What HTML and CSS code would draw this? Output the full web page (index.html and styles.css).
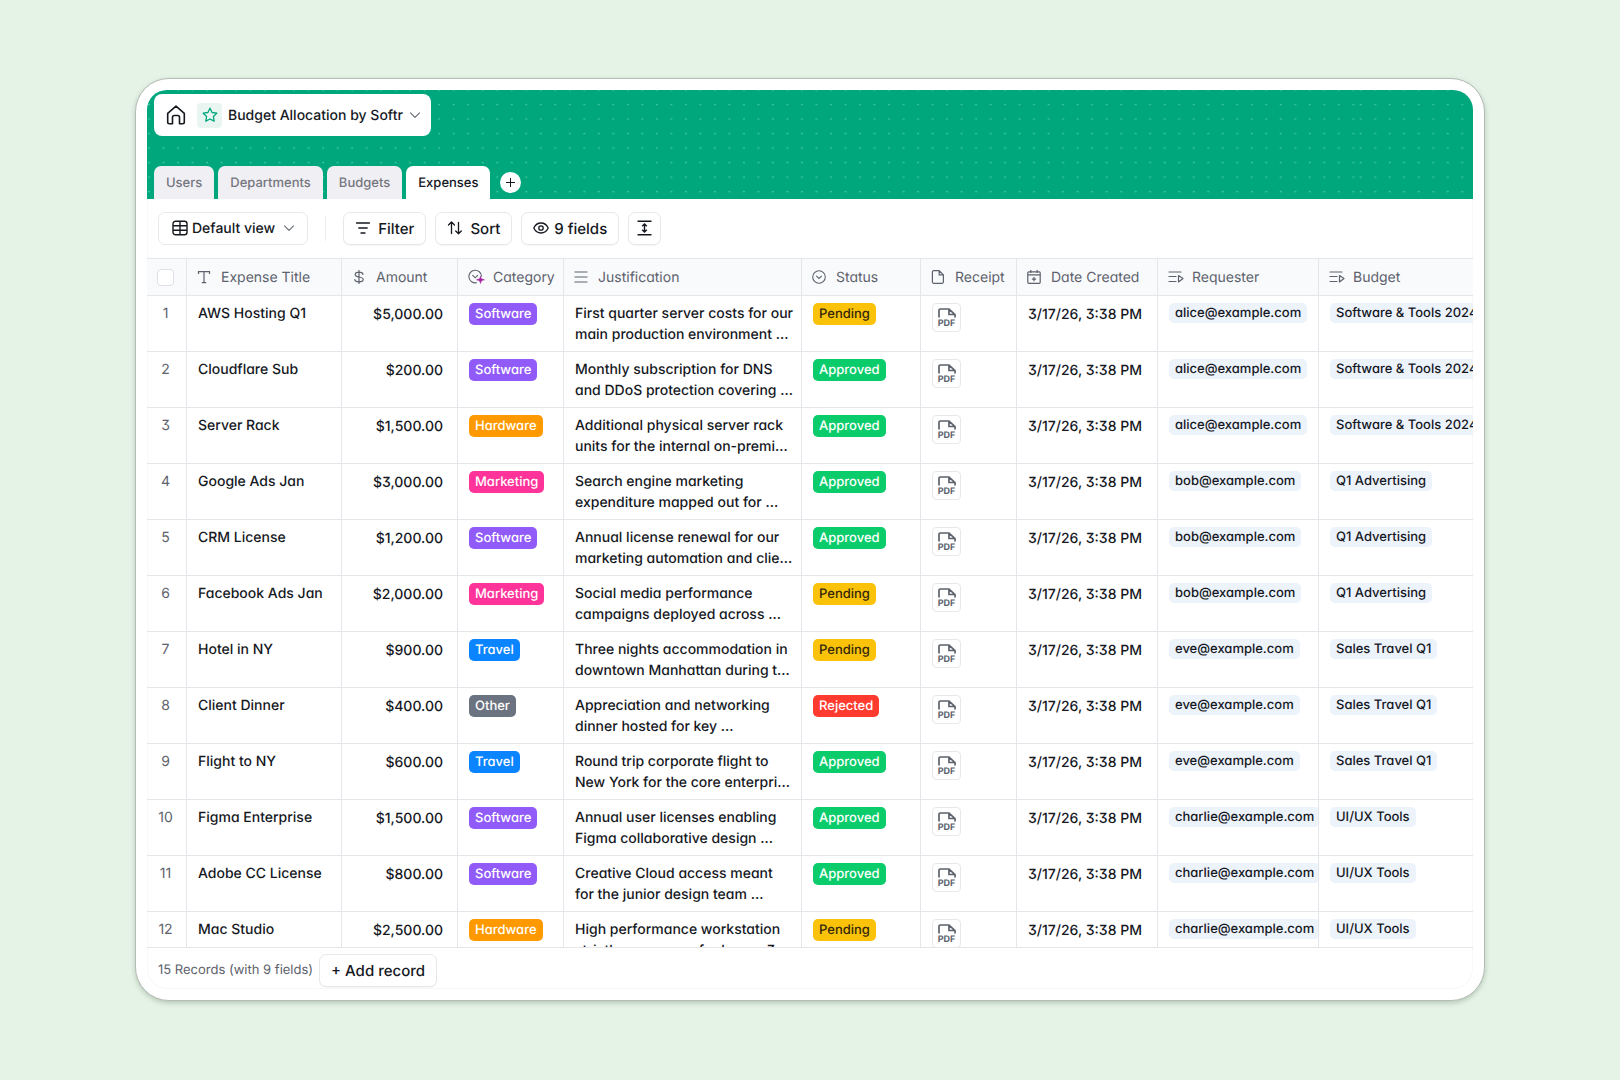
FILE: index.html
```html
<!DOCTYPE html>
<html lang="en">
<head>
<meta charset="utf-8">
<title>Budget Allocation by Softr</title>
<link rel="stylesheet" href="styles.css">
</head>
<body>
<svg class="sprite" aria-hidden="true">
  <symbol id="i-pdf" viewBox="0 0 18 10"><path d="M1 9.500V2.200A1.200 1.200 0 0 1 2.200 1H11L17 6.500V9.500M11 1V6.500H17" fill="none" stroke="currentColor" stroke-width="1.700"/></symbol>
  <symbol id="i-link" viewBox="0 0 16 16"><path d="M1 3h12M1 7.500h7M1 12.500h7M10.500 6.500l4.500 3-4.500 3.500z" fill="none" stroke="currentColor" stroke-width="1.200" stroke-linejoin="round" stroke-linecap="round"/></symbol>
  <symbol id="i-chev" viewBox="0 0 12 12"><path d="M1.500 3.800L6 8.300l4.500-4.500" fill="none" stroke="currentColor" stroke-width="1.200" stroke-linecap="round" stroke-linejoin="round"/></symbol>
</svg>
<main class="card">
  <div class="app">
    <header class="top">
      <svg class="dots" aria-hidden="true"><defs><pattern id="dot" x="0" y="-2.500" width="14.510" height="14.510" patternUnits="userSpaceOnUse"><circle cx="2" cy="2.500" r=".9" fill="#5fd9b2" fill-opacity=".75"/></pattern><pattern id="tile" width="1211.700" height="109" patternUnits="userSpaceOnUse"><rect width="1211.700" height="109" fill="url(#dot)"/></pattern></defs><rect width="100%" height="100%" fill="url(#tile)"/></svg>
      <div class="brand">
        <a class="home" href="#" aria-label="Home"><svg width="20" height="20" viewBox="0 0 20 20" fill="none" stroke="currentColor" stroke-width="1.600" stroke-linejoin="round" stroke-linecap="round"><path d="M1.700 8.400L10 1.200l8.300 7.200v8.800a1.500 1.500 0 0 1-1.500 1.500h-3.300V12.200a1.700 1.700 0 0 0-1.700-1.700H8.200a1.700 1.700 0 0 0-1.700 1.700v6.500H3.200a1.500 1.500 0 0 1-1.500-1.500z"/></svg></a>
        <span class="star"><svg width="16" height="16" viewBox="0 0 16 16" fill="none" stroke="currentColor" stroke-width="1.300" stroke-linejoin="round"><path d="M8 1.200l2.100 4.300 4.700.7-3.400 3.300.8 4.700L8 12l-4.200 2.200.8-4.700L1.200 6.200l4.700-.7z"/></svg></span>
        <button class="app-name" type="button">Budget Allocation by Softr <svg class="chev" width="12" height="12"><use href="#i-chev"/></svg></button>
      </div>
      <nav class="tabs">
        <a href="#" class="tab">Users</a>
        <a href="#" class="tab">Departments</a>
        <a href="#" class="tab">Budgets</a>
        <a href="#" class="tab active">Expenses</a>
        <button class="plus" type="button" aria-label="Add table"><svg width="9" height="9" viewBox="0 0 9 9" stroke="currentColor" stroke-width="1"><path d="M4.500 0v9M0 4.500h9"/></svg></button>
      </nav>
    </header>
    <div class="toolbar">
      <button class="btn view" type="button"><svg width="16" height="16" viewBox="0 0 16 16" fill="none" stroke="currentColor" stroke-width="1.400"><rect x="1" y="1.200" width="14" height="13.600" rx="2.500"/><path d="M1 5.700h14M1 10.300h14M8 1.200v13.600"/></svg>Default view<svg class="chev" width="12" height="12"><use href="#i-chev"/></svg></button>
      <span class="sep"></span>
      <button class="btn filter" type="button"><svg width="16" height="16" viewBox="0 0 16 16" fill="none" stroke="currentColor" stroke-width="1.300" stroke-linecap="round"><path d="M1.500 3h13M3.800 8h8.400M6 13h4"/></svg>Filter</button>
      <button class="btn filter" type="button"><svg width="16" height="16" viewBox="0 0 16 16" fill="none" stroke="currentColor" stroke-width="1.300" stroke-linecap="round" stroke-linejoin="round"><path d="M4.500 13.500v-11M1.500 5l3-3 3 3M11.500 2.500v11M8.700 11l2.800 2.800 2.800-2.800"/></svg>Sort</button>
      <button class="btn" type="button"><svg width="16" height="16" viewBox="0 0 16 16" fill="none" stroke="currentColor" stroke-width="1.300"><path d="M.8 8C2.300 4.800 5 3 8 3s5.700 1.800 7.200 5C13.700 11.200 11 13 8 13S2.300 11.200.8 8z"/><circle cx="8" cy="8" r="2.200"/></svg>9 fields</button>
      <button class="btn square" type="button" aria-label="Row height"><svg width="15" height="16" viewBox="0 0 15 16" fill="none" stroke="currentColor" stroke-width="1.400"><path d="M.5 1.200h14M.5 14.800h14M7.500 4.200v7.600M5.200 6.200l2.300-2.200 2.300 2.200M5.200 9.800l2.300 2.200 2.300-2.200"/></svg></button>
    </div>
    <div class="grid">
      <table>
        <colgroup><col class="c-num"><col class="c-title"><col class="c-amount"><col class="c-cat"><col class="c-just"><col class="c-status"><col class="c-receipt"><col class="c-date"><col class="c-req"><col></colgroup>
        <thead>
          <tr>
            <th class="num"><input type="checkbox" aria-label="Select all"></th>
            <th><span class="h"><svg width="14" height="14" viewBox="0 0 14 14" fill="none" stroke="currentColor" stroke-width="1.200"><path d="M1.500 4V1.600h11V4M7 1.600v11M4.800 12.600h4.400"/></svg>Expense Title</span></th>
            <th><span class="h"><svg width="14" height="14" viewBox="0 0 14 14" fill="none" stroke="currentColor" stroke-width="1.200" stroke-linecap="round"><path d="M7 .5v13M11 4.300C10.800 2.900 9.300 2.200 7 2.200S3.200 3 3.200 4.500 4.600 6.600 7 7s4.200 1 4.200 2.500S9.500 11.800 7 11.800 3 11 2.800 9.600"/></svg>Amount</span></th>
            <th><span class="h tight"><svg width="17" height="16" viewBox="0 0 17 16" fill="none" stroke="currentColor" stroke-width="1.100"><path d="M8.500 13.700A6.300 6.300 0 1 1 13.500 7.200M4.700 6.300l2.500 2.500 2.500-2.500" stroke-linecap="round"/><path d="M12.500 7.200c.4 2.300 1 2.900 3.900 3.600-2.900.6-3.500 1.200-3.900 3.700-.4-2.500-1-3.100-3.900-3.700 2.900-.7 3.500-1.300 3.900-3.600z" fill="#a3219e" stroke="#a3219e" stroke-width=".6"/></svg>Category</span></th>
            <th><span class="h"><svg width="14" height="14" viewBox="0 0 14 14" stroke="currentColor" stroke-width="1.200"><path d="M.5 2h13M.5 7h13M.5 12h13"/></svg>Justification</span></th>
            <th><span class="h"><svg width="14" height="14" viewBox="0 0 14 14" fill="none" stroke="currentColor" stroke-width="1.100" stroke-linecap="round"><circle cx="7" cy="7" r="6.300"/><path d="M4.500 6.200L7 8.500l2.500-2.300"/></svg>Status</span></th>
            <th><span class="h"><svg width="14" height="14" viewBox="0 0 14 14" fill="none" stroke="currentColor" stroke-width="1.200" stroke-linejoin="round"><path d="M2.600.7h5.600l4.200 4.200v7.200a1.200 1.200 0 0 1-1.200 1.200H2.600a1.200 1.200 0 0 1-1.200-1.200V1.900A1.200 1.200 0 0 1 2.600.7zM8.200.7v4.200h4.200"/></svg>Receipt</span></th>
            <th><span class="h"><svg width="14" height="14" viewBox="0 0 14 14" fill="none" stroke="currentColor" stroke-width="1.200"><rect x=".8" y="1.800" width="12.400" height="11.500" rx="1"/><path d="M.8 4.900h12.400M3.800 0v3M10.200 0v3M7 7v4.200M4.900 9.100h4.200"/></svg>Date Created</span></th>
            <th><span class="h tight"><svg width="16" height="16"><use href="#i-link"/></svg>Requester</span></th>
            <th><span class="h tight"><svg width="16" height="16"><use href="#i-link"/></svg>Budget</span></th>
          </tr>
        </thead>
        <tbody>
          <tr><td class="num">1</td><td>AWS Hosting Q1</td><td class="amount">$5,000.00</td><td><span class="chip software">Software</span></td><td>First quarter server costs for our main production environment ...</td><td><span class="chip pending">Pending</span></td><td><a class="pdf" href="#"><svg width="18" height="10"><use href="#i-pdf"/></svg><b>PDF</b></a></td><td class="date">3/17/26, 3:38 PM</td><td><span class="ref">alice@example.com</span></td><td><span class="ref">Software &amp; Tools 2024</span></td></tr>
          <tr><td class="num">2</td><td>Cloudflare Sub</td><td class="amount">$200.00</td><td><span class="chip software">Software</span></td><td>Monthly subscription for DNS and DDoS protection covering ...</td><td><span class="chip approved">Approved</span></td><td><a class="pdf" href="#"><svg width="18" height="10"><use href="#i-pdf"/></svg><b>PDF</b></a></td><td class="date">3/17/26, 3:38 PM</td><td><span class="ref">alice@example.com</span></td><td><span class="ref">Software &amp; Tools 2024</span></td></tr>
          <tr><td class="num">3</td><td>Server Rack</td><td class="amount">$1,500.00</td><td><span class="chip hardware">Hardware</span></td><td>Additional physical server rack units for the internal on-premi...</td><td><span class="chip approved">Approved</span></td><td><a class="pdf" href="#"><svg width="18" height="10"><use href="#i-pdf"/></svg><b>PDF</b></a></td><td class="date">3/17/26, 3:38 PM</td><td><span class="ref">alice@example.com</span></td><td><span class="ref">Software &amp; Tools 2024</span></td></tr>
          <tr><td class="num">4</td><td>Google Ads Jan</td><td class="amount">$3,000.00</td><td><span class="chip marketing">Marketing</span></td><td>Search engine marketing expenditure mapped out for ...</td><td><span class="chip approved">Approved</span></td><td><a class="pdf" href="#"><svg width="18" height="10"><use href="#i-pdf"/></svg><b>PDF</b></a></td><td class="date">3/17/26, 3:38 PM</td><td><span class="ref">bob@example.com</span></td><td><span class="ref">Q1 Advertising</span></td></tr>
          <tr><td class="num">5</td><td>CRM License</td><td class="amount">$1,200.00</td><td><span class="chip software">Software</span></td><td>Annual license renewal for our marketing automation and clie...</td><td><span class="chip approved">Approved</span></td><td><a class="pdf" href="#"><svg width="18" height="10"><use href="#i-pdf"/></svg><b>PDF</b></a></td><td class="date">3/17/26, 3:38 PM</td><td><span class="ref">bob@example.com</span></td><td><span class="ref">Q1 Advertising</span></td></tr>
          <tr><td class="num">6</td><td>Facebook Ads Jan</td><td class="amount">$2,000.00</td><td><span class="chip marketing">Marketing</span></td><td>Social media performance campaigns deployed across ...</td><td><span class="chip pending">Pending</span></td><td><a class="pdf" href="#"><svg width="18" height="10"><use href="#i-pdf"/></svg><b>PDF</b></a></td><td class="date">3/17/26, 3:38 PM</td><td><span class="ref">bob@example.com</span></td><td><span class="ref">Q1 Advertising</span></td></tr>
          <tr><td class="num">7</td><td>Hotel in NY</td><td class="amount">$900.00</td><td><span class="chip travel">Travel</span></td><td>Three nights accommodation in downtown Manhattan during t...</td><td><span class="chip pending">Pending</span></td><td><a class="pdf" href="#"><svg width="18" height="10"><use href="#i-pdf"/></svg><b>PDF</b></a></td><td class="date">3/17/26, 3:38 PM</td><td><span class="ref">eve@example.com</span></td><td><span class="ref">Sales Travel Q1</span></td></tr>
          <tr><td class="num">8</td><td>Client Dinner</td><td class="amount">$400.00</td><td><span class="chip other">Other</span></td><td>Appreciation and networking dinner hosted for key ...</td><td><span class="chip rejected">Rejected</span></td><td><a class="pdf" href="#"><svg width="18" height="10"><use href="#i-pdf"/></svg><b>PDF</b></a></td><td class="date">3/17/26, 3:38 PM</td><td><span class="ref">eve@example.com</span></td><td><span class="ref">Sales Travel Q1</span></td></tr>
          <tr><td class="num">9</td><td>Flight to NY</td><td class="amount">$600.00</td><td><span class="chip travel">Travel</span></td><td>Round trip corporate flight to New York for the core enterpri...</td><td><span class="chip approved">Approved</span></td><td><a class="pdf" href="#"><svg width="18" height="10"><use href="#i-pdf"/></svg><b>PDF</b></a></td><td class="date">3/17/26, 3:38 PM</td><td><span class="ref">eve@example.com</span></td><td><span class="ref">Sales Travel Q1</span></td></tr>
          <tr><td class="num">10</td><td>Figma Enterprise</td><td class="amount">$1,500.00</td><td><span class="chip software">Software</span></td><td>Annual user licenses enabling Figma collaborative design ...</td><td><span class="chip approved">Approved</span></td><td><a class="pdf" href="#"><svg width="18" height="10"><use href="#i-pdf"/></svg><b>PDF</b></a></td><td class="date">3/17/26, 3:38 PM</td><td><span class="ref">charlie@example.com</span></td><td><span class="ref">UI/UX Tools</span></td></tr>
          <tr><td class="num">11</td><td>Adobe CC License</td><td class="amount">$800.00</td><td><span class="chip software">Software</span></td><td>Creative Cloud access meant for&nbsp;the junior design team ...</td><td><span class="chip approved">Approved</span></td><td><a class="pdf" href="#"><svg width="18" height="10"><use href="#i-pdf"/></svg><b>PDF</b></a></td><td class="date">3/17/26, 3:38 PM</td><td><span class="ref">charlie@example.com</span></td><td><span class="ref">UI/UX Tools</span></td></tr>
          <tr><td class="num">12</td><td>Mac Studio</td><td class="amount">$2,500.00</td><td><span class="chip hardware">Hardware</span></td><td>High performance workstation strictly necessary for heavy 3...</td><td><span class="chip pending">Pending</span></td><td><a class="pdf" href="#"><svg width="18" height="10"><use href="#i-pdf"/></svg><b>PDF</b></a></td><td class="date">3/17/26, 3:38 PM</td><td><span class="ref">charlie@example.com</span></td><td><span class="ref">UI/UX Tools</span></td></tr>
        </tbody>
      </table>
    </div>
    <footer class="foot">
      <span>15 Records (with 9 fields)</span>
      <button class="btn add" type="button">+ Add record</button>
    </footer>
  </div>
</main>
</body>
</html>
```
FILE: styles.css
```css
* { box-sizing: border-box; }
body {
  margin: 0;
  height: 100vh;
  padding: 78px 135px 79px;
  display: flex;
  background: #e5f3e6;
  color: #15181e;
  font: 500 14px/21px Inter, "Liberation Sans", sans-serif;
  text-rendering: geometricPrecision;
}
button, input { font: inherit; color: inherit; text-rendering: inherit; }
a { color: inherit; text-decoration: none; }
svg { flex: none; display: block; }
.sprite { position: absolute; width: 0; height: 0; }

.card {
  flex: 1;
  min-width: 0;
  display: flex;
  padding: 11px;
  background: #fff;
  border: 1px solid #b4bcb5;
  border-radius: 34px;
  box-shadow: 0 2px 5px rgba(40, 70, 45, .25);
}
.app {
  flex: 1;
  min-width: 0;
  display: flex;
  flex-direction: column;
  overflow: hidden;
  border-radius: 20px;
  box-shadow: inset 0 0 0 1px #f8f8f9;
}

/* Header */
.top {
  position: relative;
  height: 109px;
  padding: 4px 7px 0;
  display: flex;
  flex-direction: column;
  justify-content: space-between;
  align-items: flex-start;
  background: #00a77d;
}
.dots { position: absolute; inset: 0; width: 100%; height: 100%; }
.brand, .tabs { position: relative; display: flex; }
.brand {
  height: 42px;
  padding: 0 10px 0 12px;
  align-items: center;
  background: #fff;
  border-radius: 8px;
}
.home { margin-right: 11px; }
.star {
  width: 25px;
  height: 25px;
  display: grid;
  place-items: center;
  border-radius: 4px;
  background: #e8f5f1;
  color: #00a77d;
}
.app-name {
  display: flex;
  align-items: center;
  gap: 6px;
  padding: 0 0 0 6px;
  border: 0;
  background: none;
}
.chev { color: #6b7079; }
.tabs { gap: 4px; align-items: flex-end; }
.tab {
  height: 33px;
  padding: 0 12px;
  line-height: 34px;
  font-size: 13px;
  border-radius: 7px 7px 0 0;
  background: #f0eff4;
  color: #76777f;
}
.tab.active { background: #fff; color: #15181e; }
.plus {
  width: 21px;
  height: 21px;
  margin: 0 0 6px 6px;
  padding: 0;
  display: grid;
  place-items: center;
  border: 0;
  border-radius: 50%;
  background: #fff;
}

/* Toolbar */
.toolbar {
  height: 60px;
  padding: 0 11px 1px;
  display: flex;
  align-items: center;
  gap: 9px;
  border-bottom: 1px solid #e5e6ea;
}
.btn {
  height: 33px;
  padding: 0 11px;
  display: flex;
  align-items: center;
  gap: 5px;
  border: 1px solid #e7e8eb;
  border-radius: 7px;
  background: #fff;
  box-shadow: 0 1px 1px rgba(0, 0, 0, .04);
  font-size: 15px;
}
.view { padding: 0 12px 0 13px; gap: 4px; font-size: 14px; box-shadow: none; }
.view .chev { margin-left: 4px; }
.sep { width: 1px; height: 25px; margin: 0 8px; background: #eceef0; }
.filter { gap: 7px; }
.square { padding: 0 8px; }

/* Records table */
.grid {
  flex: 1;
  min-height: 0;
  overflow: auto;
  scrollbar-width: none;
  font-feature-settings: "cv09", "cv11";
}
table { width: 100%; table-layout: fixed; border-spacing: 0; }
.c-num { width: 40px; }
.c-title { width: 155px; }
.c-amount { width: 116px; }
.c-cat { width: 106px; }
.c-just { width: 238px; }
.c-status { width: 119px; }
.c-receipt { width: 96px; }
.c-date { width: 141px; }
.c-req { width: 161px; }
th, td {
  border-right: 1px solid #e5e6ea;
  border-bottom: 1px solid #e5e6ea;
  overflow: hidden;
  text-align: left;
}
th:last-child, td:last-child { border-right: 0; }
th {
  height: 37px;
  padding: 0 0 0 10px;
  background: #f9fafc;
  color: #5d626c;
  font-weight: 400;
  white-space: nowrap;
}
td { height: 56px; padding: 7px 0 0 11px; vertical-align: top; }
.h { display: flex; align-items: center; gap: 10px; }
.h.tight { gap: 8px; }
th.num { padding: 0 2px 0 0; }
.num input {
  appearance: none;
  display: block;
  width: 17px;
  height: 17px;
  margin: 0 auto;
  border: 1px solid #dfe1e5;
  border-radius: 4px;
  background: #fff;
}
td.num {
  padding: 7px 2px 0 0;
  text-align: center;
  color: #5d626c;
  font-weight: 400;
}
td.amount { padding-right: 14px; text-align: right; line-height: 23px; }
td.date { line-height: 23px; }
.chip, .ref {
  display: inline-block;
  vertical-align: top;
  padding: 0 6px;
  border-radius: 5px;
  font-size: 13px;
  white-space: nowrap;
}
.chip { color: #fff; line-height: 22px; }
.ref { background: #edf3fb; line-height: 20px; }
.software { background: #915bf9; }
.hardware { background: #ff9900; }
.marketing { background: #ff3399; }
.travel { background: #0a84ff; }
.other { background: #6b7280; }
.approved { background: #0acc6b; }
.pending { background: #fac30a; color: #33290a; }
.rejected { background: #ff3b30; }
.pdf {
  width: 29px;
  height: 29px;
  padding-top: 4px;
  display: flex;
  flex-direction: column;
  align-items: center;
  border: 1px solid #e7e8ec;
  border-radius: 4px;
  color: #5d626c;
}
.pdf b { font-size: 9px; line-height: 11px; }

/* Footer */
.foot {
  height: 42px;
  padding: 4px 11px 0;
  display: flex;
  align-items: center;
  gap: 6px;
  border-top: 1px solid #e5e6ea;
  color: #5d626c;
  font-weight: 400;
  font-size: 13px;
}
.add { color: #15181e; font-weight: 500; }
```
